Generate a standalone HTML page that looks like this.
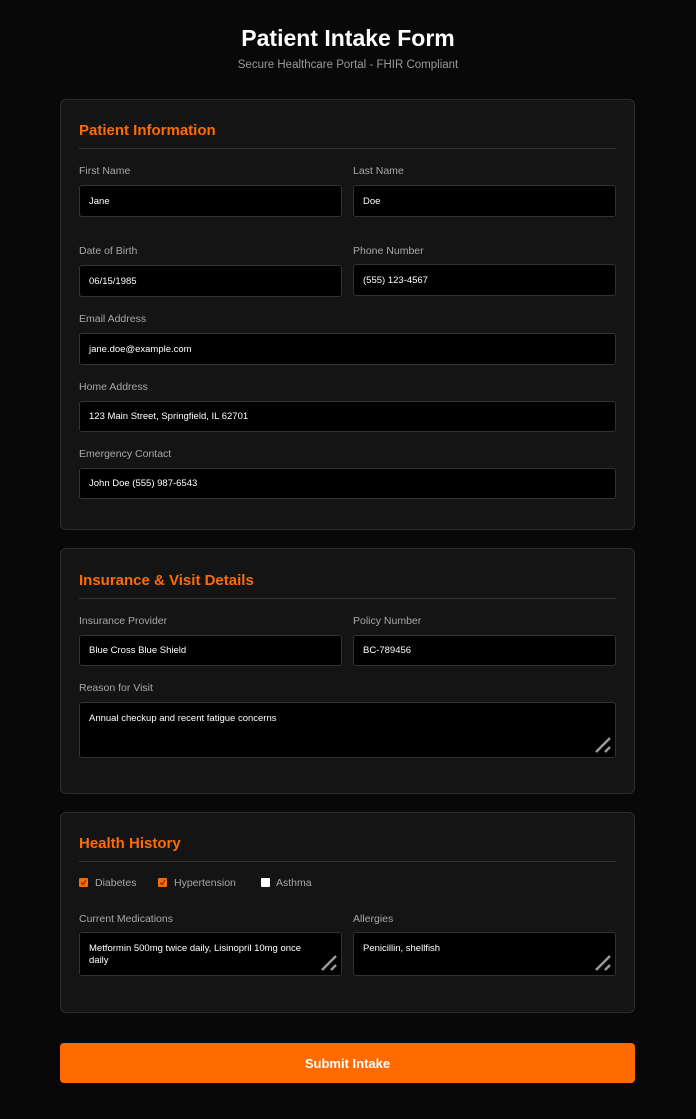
<!DOCTYPE html>
<html><head><style>
*{box-sizing:border-box;margin:0;padding:0}
body{width:696px;height:1119px;background:#080808;font-family:"Liberation Sans",sans-serif;position:relative;overflow:hidden}
h1{position:absolute;left:0;width:696px;top:25px;text-align:center;color:#fff;font-size:23px;font-weight:bold}
.sub{position:absolute;left:0;width:696px;top:59px;text-align:center;color:#9a9a9a;font-size:11.5px}
.card{position:absolute;left:60px;width:575px;background:#141414;border:1px solid #2c2c2c;border-radius:6px}
.t{position:absolute;left:79px;color:#ff6b00;font-size:15px;font-weight:bold}
.hr{position:absolute;left:79px;width:537px;height:1px;background:#333}
.l{position:absolute;color:#a8a8a8;font-size:10.5px}
.i{position:absolute;background:#000;border:1px solid #333;border-radius:3px;color:#fff;font-size:9.5px;padding:0 9px;display:flex;align-items:center}
.ta{align-items:flex-start;padding-top:10px;line-height:12px}
.g{position:absolute;right:3px;bottom:3px;width:18px;height:18px}
.cb{position:absolute;width:9px;height:9px;border-radius:1px}
.btn{position:absolute;left:60px;top:1043px;width:575px;height:40px;background:#ff6b00;border-radius:4px;color:#fff;font-size:13px;font-weight:bold;display:flex;align-items:center;justify-content:center}
</style></head><body>
<h1>Patient Intake Form</h1>
<div class="sub">Secure Healthcare Portal - FHIR Compliant</div>

<div class="card" style="top:99px;height:431px"></div>
<div class="t" style="top:122px">Patient Information</div>
<div class="hr" style="top:148px"></div>
<div class="l" style="left:79px;top:165px">First Name</div>
<div class="l" style="left:353px;top:165px">Last Name</div>
<div class="i" style="left:79px;top:185px;width:263px;height:32px">Jane</div>
<div class="i" style="left:353px;top:185px;width:263px;height:32px">Doe</div>
<div class="l" style="left:79px;top:245px">Date of Birth</div>
<div class="l" style="left:353px;top:245px">Phone Number</div>
<div class="i" style="left:79px;top:265px;width:263px;height:32px">06/15/1985</div>
<div class="i" style="left:353px;top:264px;width:263px;height:32px">(555) 123-4567</div>
<div class="l" style="left:79px;top:313px">Email Address</div>
<div class="i" style="left:79px;top:333px;width:537px;height:32px">jane.doe@example.com</div>
<div class="l" style="left:79px;top:381px">Home Address</div>
<div class="i" style="left:79px;top:401px;width:537px;height:31px">123 Main Street, Springfield, IL 62701</div>
<div class="l" style="left:79px;top:448px">Emergency Contact</div>
<div class="i" style="left:79px;top:468px;width:537px;height:31px">John Doe (555) 987-6543</div>

<div class="card" style="top:548px;height:246px"></div>
<div class="t" style="top:572px">Insurance &amp; Visit Details</div>
<div class="hr" style="top:598px"></div>
<div class="l" style="left:79px;top:615px">Insurance Provider</div>
<div class="l" style="left:353px;top:615px">Policy Number</div>
<div class="i" style="left:79px;top:635px;width:263px;height:31px">Blue Cross Blue Shield</div>
<div class="i" style="left:353px;top:635px;width:263px;height:31px">BC-789456</div>
<div class="l" style="left:79px;top:682px">Reason for Visit</div>
<div class="i ta" style="left:79px;top:702px;width:537px;height:56px">Annual checkup and recent fatigue concerns<svg class="g" viewBox="0 0 18 18"><path d="M2 16L16 2M11 16L16 11" stroke="#999" stroke-width="2.5"/></svg></div>

<div class="card" style="top:812px;height:201px"></div>
<div class="t" style="top:835px">Health History</div>
<div class="hr" style="top:861px"></div>
<svg class="cb" style="left:79px;top:878px" viewBox="0 0 9 9"><rect width="9" height="9" rx="1" fill="#ff6b00"/><path d="M2 4.5L4 6.5L7 2" stroke="#7a3300" stroke-width="1.2" fill="none"/></svg>
<div class="l" style="left:95px;top:877px">Diabetes</div>
<svg class="cb" style="left:158px;top:878px" viewBox="0 0 9 9"><rect width="9" height="9" rx="1" fill="#ff6b00"/><path d="M2 4.5L4 6.5L7 2" stroke="#7a3300" stroke-width="1.2" fill="none"/></svg>
<div class="l" style="left:174px;top:877px">Hypertension</div>
<div class="cb" style="left:261px;top:878px;background:#fff"></div>
<div class="l" style="left:276px;top:877px">Asthma</div>
<div class="l" style="left:79px;top:913px">Current Medications</div>
<div class="l" style="left:353px;top:913px">Allergies</div>
<div class="i ta" style="left:79px;top:932px;width:263px;height:44px;padding-right:20px">Metformin 500mg twice daily, Lisinopril 10mg once daily<svg class="g" viewBox="0 0 18 18"><path d="M2 16L16 2M11 16L16 11" stroke="#999" stroke-width="2.5"/></svg></div>
<div class="i ta" style="left:353px;top:932px;width:263px;height:44px">Penicillin, shellfish<svg class="g" viewBox="0 0 18 18"><path d="M2 16L16 2M11 16L16 11" stroke="#999" stroke-width="2.5"/></svg></div>

<div class="btn">Submit Intake</div>
</body></html>
